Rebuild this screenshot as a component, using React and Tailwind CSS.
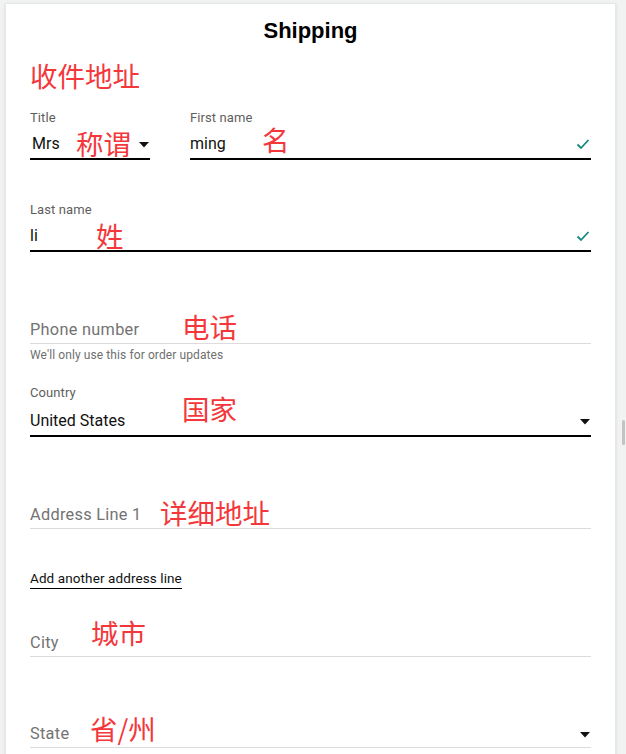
import React from "react";

const cjk = { fontFamily: '"Noto Sans CJK SC", sans-serif' };
const ui = { fontFamily: 'Roboto, "Liberation Sans", sans-serif' };

function Note({ children, className = "" }) {
  return (
    <span style={cjk} className={`text-[27.5px] leading-none text-[#f4373b] whitespace-nowrap ${className}`}>
      {children}
    </span>
  );
}

function Check() {
  return (
    <svg width="14" height="12" viewBox="0 0 14 12" className="ml-auto mr-[1px] shrink-0">
      <path d="M1.5 6.5 L5 10 L12.5 2" fill="none" stroke="#17897d" strokeWidth="1.8" />
    </svg>
  );
}

function Caret({ className = "" }) {
  return (
    <svg width="10" height="6" viewBox="0 0 10 6" className={`shrink-0 ${className}`}>
      <path d="M0 0 H10 L5 5.5 Z" fill="#111" />
    </svg>
  );
}

function Filled({ label, value, valueW, note, noteCls, right, rowCls = "h-[35px] pt-[4px]", className = "" }) {
  return (
    <div className={className}>
      <div className="text-[13px] leading-[14px] tracking-[0.1px] text-[#5e5e5e]">{label}</div>
      <div className={`flex items-center border-b-2 border-black ${rowCls}`}>
        <span className="text-[16px] text-[#111] shrink-0" style={{ width: valueW }}>{value}</span>
        <Note className={noteCls}>{note}</Note>
        {right}
      </div>
    </div>
  );
}

function Empty({ placeholder, phW, note, noteCls, right, className = "" }) {
  return (
    <div className={`flex items-center h-[31px] pt-[4px] border-b border-[#dcdcdc] ${className}`}>
      <span className="text-[16.3px] tracking-[0.3px] text-[#737373] shrink-0" style={{ width: phW }}>{placeholder}</span>
      <Note className={noteCls}>{note}</Note>
      {right}
    </div>
  );
}

export default function App() {
  return (
    <div className="min-h-screen bg-[#f1f2f2] flex pl-[5px] pt-[3px]" style={ui}>
      <div className="w-[611px] bg-white border border-[#e6e7e7] shadow-sm px-[24px] pt-[13px] pb-[40px]">
        <h1 className="text-center text-[22px] leading-[28px] font-bold text-black" style={{ fontFamily: '"Liberation Sans", Arial, sans-serif' }}>
          Shipping
        </h1>

        <div className="mt-[14px] h-[34px] flex items-center">
          <Note>收件地址</Note>
        </div>

        <div className="mt-[18px] flex gap-[40px]">
          <Filled
            className="w-[120px]"
            label="Title"
            value={<span className="pl-[2px]">Mrs</span>}
            valueW={46}
            note="称谓"
            right={<Caret className="ml-auto mr-[1px] mt-[3px]" />}
          />
          <Filled
            className="flex-1"
            label="First name"
            value="ming"
            valueW={72}
            note="名"
            noteCls="-translate-y-[4px]"
            right={<Check />}
          />
        </div>

        <Filled
          className="mt-[43px]"
          label="Last name"
          value="li"
          valueW={66}
          note="姓"
          right={<Check />}
        />

        <Empty className="mt-[61px]" placeholder="Phone number" phW={152} note="电话" noteCls="-translate-y-[3px]" />
        <div className="mt-[4px] text-[12px] leading-[14px] tracking-[0.1px] text-[#707070]">We'll only use this for order updates</div>

        <Filled
          className="mt-[24px]"
          label="Country"
          value="United States"
          valueW={152}
          note="国家"
          noteCls="-translate-y-[12px]"
          rowCls="h-[37px] pt-[6px]"
          right={<Caret className="ml-auto mr-[1px] mt-[2px]" />}
        />

        <Empty className="mt-[61px]" placeholder="Address Line 1" phW={130} note="详细地址" noteCls="-translate-y-[2px]" />

        <div className="mt-[42px] flex">
          <a className="text-[13.5px] leading-[14px] tracking-[0.1px] text-[#111] pb-[3px] border-b border-black">
            Add another address line
          </a>
        </div>

        <Empty className="mt-[37px]" placeholder="City" phW={61} note="城市" noteCls="-translate-y-[10px]" />

        <Empty
          className="mt-[60px]"
          placeholder="State"
          phW={60}
          note="省/州"
          noteCls="-translate-y-[5px]"
          right={<Caret className="ml-auto mr-[1px] mt-[2px]" />}
        />
      </div>
      <div className="w-[10px] flex justify-end">
        <div className="mt-[417px] mr-[1px] w-[3px] h-[25px] bg-[#c3c3c3] rounded-sm" />
      </div>
    </div>
  );
}
